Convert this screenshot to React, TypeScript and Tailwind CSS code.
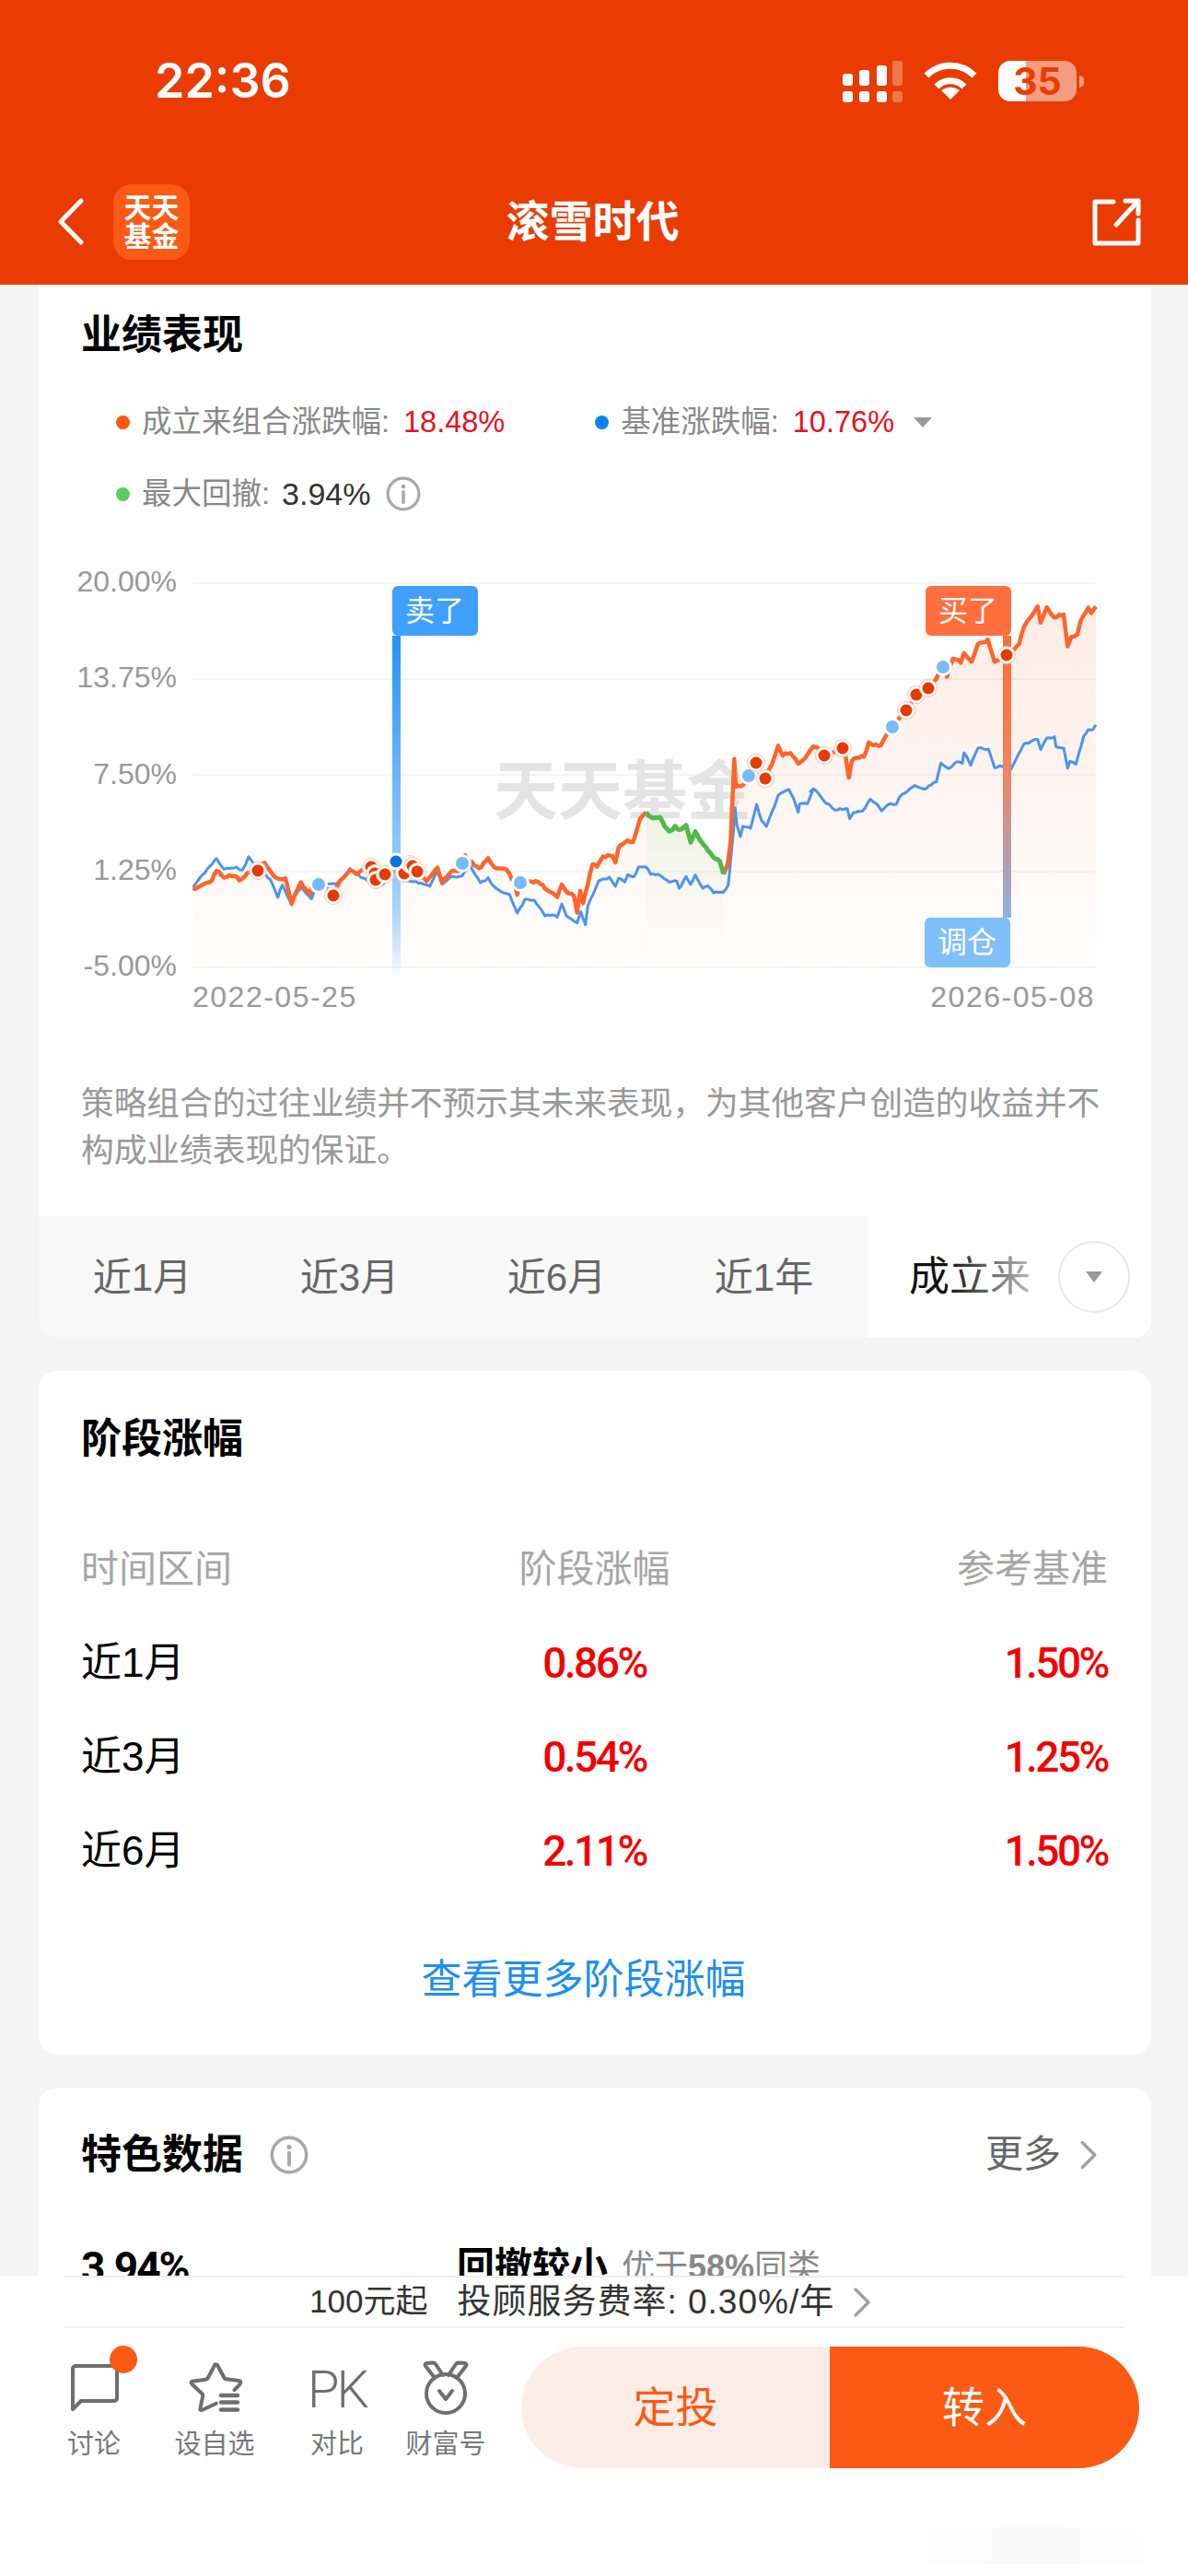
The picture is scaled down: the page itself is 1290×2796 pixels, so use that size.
import { ChevronRight } from 'lucide-react'

type Pt = number[]

// the traces below were read off 3x crops, hence the three offsets
const fromA = (p: Pt[]) => p.map(([x, y]) => [200 + x / 3, 880 + y / 3])
const fromB = (p: Pt[]) => p.map(([x, y]) => [600 + x / 3, 760 + y / 3])
const fromC = (p: Pt[]) => p.map(([x, y]) => [880 + x / 3, 630 + y / 3])

const ORANGE_1 = [
  ...fromA([[28, 255], [60, 240], [90, 228], [105, 195], [130, 215], [165, 210], [180, 225], [205, 205], [240, 190], [262, 168], [285, 205], [310, 225], [330, 220], [350, 300], [380, 235], [410, 270], [420, 225], [460, 250], [485, 275], [500, 240], [540, 190], [560, 205], [580, 195], [605, 185], [620, 225], [655, 210], [690, 190], [720, 205], [760, 195], [790, 230], [825, 185], [840, 230], [865, 200], [905, 195], [915, 148], [960, 190], [990, 155], [1010, 185], [1050, 190], [1075, 235], [1085, 270], [1095, 235], [1130, 230], [1160, 235], [1190, 265]]),
  ...fromB([[0, 630], [15, 640], [30, 600], [45, 625], [70, 635], [80, 695], [90, 620], [100, 660], [130, 535], [145, 540], [165, 510], [195, 505], [205, 530], [215, 480], [245, 460], [262, 465], [285, 390], [305, 365]]),
]
const GREEN = fromB([[305, 365], [320, 380], [350, 385], [380, 430], [400, 410], [415, 425], [435, 405], [450, 465], [465, 430], [500, 480], [530, 515], [545, 525], [557, 565]])
const ORANGE_2 = [
  ...fromB([[557, 565], [570, 535], [580, 460], [592, 190], [597, 280], [620, 275], [650, 240], [690, 250], [715, 205], [735, 148], [750, 180], [775, 170], [800, 205], [830, 180], [850, 150]]),
  ...fromC([[15, 540], [48, 570], [108, 545], [115, 575], [125, 645], [135, 585], [175, 570], [190, 530], [230, 540], [250, 500], [268, 476], [312, 424], [345, 372], [383, 350], [410, 320], [430, 280], [445, 310], [465, 255], [490, 265], [500, 240], [525, 265], [545, 210], [578, 195], [600, 265], [640, 243], [680, 210], [695, 150], [740, 85], [750, 135], [770, 90], [795, 120], [825, 110], [838, 215], [850, 185], [870, 175], [880, 130], [905, 90], [915, 110], [930, 85]]),
]
const BLUE = [
  ...fromA([[28, 248], [60, 210], [105, 155], [130, 190], [170, 185], [190, 195], [210, 152], [225, 170], [250, 190], [280, 225], [305, 280], [320, 240], [345, 295], [380, 250], [415, 285], [430, 245], [500, 235], [540, 190], [575, 215], [600, 230], [640, 245], [690, 195], [720, 225], [770, 235], [800, 245], [825, 195], [840, 240], [870, 215], [905, 215], [930, 175], [965, 235], [990, 220], [1010, 250], [1060, 275], [1085, 335], [1110, 290], [1140, 290], [1175, 340]]),
  ...fromB([[0, 700], [15, 705], [30, 665], [45, 700], [80, 725], [92, 690], [107, 730], [115, 670], [150, 590], [185, 578], [205, 605], [215, 580], [235, 590], [245, 570], [265, 575], [280, 545], [305, 545], [320, 565], [350, 570], [380, 590], [405, 590], [412, 615], [435, 575], [450, 598], [465, 570], [490, 612], [505, 605], [525, 625], [555, 628], [572, 605], [590, 420], [595, 350], [600, 405], [612, 445], [620, 410], [645, 415], [665, 340], [680, 390], [697, 410], [715, 365], [735, 310], [770, 292], [785, 320], [800, 365], [805, 335], [830, 335], [850, 290]]),
  ...fromC([[0, 685], [15, 680], [50, 725], [80, 745], [120, 745], [128, 775], [140, 755], [170, 752], [195, 715], [215, 725], [232, 750], [260, 725], [280, 730], [290, 705], [340, 670], [370, 680], [410, 655], [425, 595], [450, 615], [475, 590], [495, 595], [500, 560], [522, 600], [545, 545], [580, 550], [600, 610], [640, 600], [652, 615], [695, 535], [740, 515], [750, 550], [770, 515], [795, 510], [800, 540], [825, 545], [838, 610], [845, 590], [865, 598], [890, 510], [905, 485], [920, 488], [930, 470]]),
]

const RED_MARKS = [[280, 945], [362, 972], [403, 941], [407, 948], [408, 955], [418, 949], [439, 948], [445, 938], [448, 940], [453, 946], [821, 828], [831, 845], [895, 820], [915, 812], [984, 771], [995, 754], [1008, 747], [1093, 711]]
const BLUE_MARKS = [[346, 960], [502, 937], [565, 958], [813, 842], [969, 789], [1024, 724]]
const Y_LABELS = ['20.00%', '13.75%', '7.50%', '1.25%', '-5.00%']
const GRID_Y = [633, 737, 841, 946, 1050]

const TABS = ['近1月', '近3月', '近6月', '近1年']
const STAGES = [
  { label: '近1月', stage: '0.86%', base: '1.50%' },
  { label: '近3月', stage: '0.54%', base: '1.25%' },
  { label: '近6月', stage: '2.11%', base: '1.50%' },
]

// small fixed-seed wobble so the long lines look like daily data
function jag(points: Pt[], amp: number, seed: number) {
  let s = seed
  const out: string[] = []
  for (let i = 0; i < points.length - 1; i++) {
    const [x1, y1] = points[i]
    const [x2, y2] = points[i + 1]
    const n = Math.max(1, Math.floor((x2 - x1) / 2.5))
    for (let k = 0; k < n; k++) {
      const t = k / n
      s = (s * 9301 + 49297) % 233280
      const wobble = (s / 233280 - 0.5) * amp * 2
      out.push(`${(x1 + (x2 - x1) * t).toFixed(1)},${(y1 + (y2 - y1) * t + wobble).toFixed(1)}`)
    }
  }
  const last = points[points.length - 1]
  out.push(`${last[0]},${last[1]}`)
  return out.join(' ')
}

function InfoIcon({ size }: { size: number }) {
  return (
    <svg width={size} height={size} viewBox="0 0 36 36" fill="none">
      <circle cx="18" cy="18" r="16" stroke="#A8A8A8" strokeWidth="3" />
      <circle cx="18" cy="10.5" r="2.2" fill="#A8A8A8" />
      <path d="M18 16v11" stroke="#A8A8A8" strokeWidth="3.4" strokeLinecap="round" />
    </svg>
  )
}

function StatusBar() {
  return (
    <div className="flex h-[176px] items-center justify-between pl-[168px] pr-[113px]">
      <span className="font-['Inter',sans-serif] text-[52px] font-semibold text-white">22:36</span>
      <div className="flex items-center gap-[23px]">
        <svg width="65" height="45" viewBox="916 64 65 45" fill="#fff">
          <rect x="916" y="78" width="11" height="13" rx="3" />
          <rect x="934" y="74" width="11" height="17" rx="3" />
          <rect x="953" y="69" width="11" height="22" rx="3" />
          <rect x="970" y="64" width="11" height="27" rx="3" opacity="0.3" />
          <rect x="916" y="97" width="11" height="12" rx="3" />
          <rect x="934" y="97" width="11" height="12" rx="3" />
          <rect x="953" y="97" width="11" height="12" rx="3" />
          <rect x="970" y="97" width="11" height="12" rx="3" opacity="0.3" />
        </svg>
        <svg width="58" height="42" viewBox="1004 66 58 42" fill="none">
          <path d="M1007 81a37 37 0 0 1 52 0" stroke="#fff" strokeWidth="7" />
          <path d="M1018 93a21 21 0 0 1 30 0" stroke="#fff" strokeWidth="7" />
          <path d="M1033 107l-10-10q10-7 20 0z" fill="#fff" />
        </svg>
        <div className="flex items-center gap-[3px]">
          <div className="flex h-[44px] w-[85px] items-center justify-center rounded-[13px] bg-[linear-gradient(90deg,#ffffff_30px,#F59D80_30px)]">
            <span className="font-['Inter',sans-serif] text-[41px] font-bold leading-none text-[#EA3C02]">35</span>
          </div>
          <div className="h-[13px] w-[5px] rounded-r-full bg-white/50" />
        </div>
      </div>
    </div>
  )
}

function NavBar() {
  return (
    <div className="grid h-[130px] grid-cols-[1fr_auto_1fr] items-center px-[50px]">
      <div className="flex items-center gap-8 pl-[13px]">
        <svg width="28" height="52" viewBox="63 218 28 52" fill="none">
          <path d="M88 221L66 243.5L88 266" stroke="#fff" strokeWidth="5" strokeLinecap="round" strokeLinejoin="round" />
        </svg>
        <div className="flex h-[82px] w-[83px] flex-col items-center justify-center rounded-[20px] bg-[#FB5A14] text-[30px] font-bold leading-[31px] text-white">
          <span>天天</span>
          <span>基金</span>
        </div>
      </div>
      <span className="pr-[3px] text-[47px] font-bold text-white">滚雪时代</span>
      <div className="flex justify-end">
        <svg width="55" height="54" viewBox="1185 216 55 54" fill="none" stroke="#fff" strokeWidth="5" strokeLinecap="round" strokeLinejoin="round">
          <path d="M1209 221h-20v45h47v-25" />
          <path d="M1212 246l24-26" />
          <path d="M1222 220h14v14" />
        </svg>
      </div>
    </div>
  )
}

function TrendChart() {
  const orangeArea = `${jag(ORANGE_1, 0, 1)} ${jag(GREEN, 0, 1)} ${jag(ORANGE_2, 0, 1)} 1190,1050 209,1050`
  const greenArea = `${jag(GREEN, 0, 1)} 786,1050 702,1050`

  return (
    <div className="mt-[53px] flex h-[451px]">
      <div className="flex w-[150px] flex-col justify-between text-right text-[32px] leading-[34px] text-[#999999]">
        {Y_LABELS.map(label => (
          <span key={label}>{label}</span>
        ))}
      </div>
      <svg className="ml-[17px] mt-[6px]" width="985" height="445" viewBox="209 620 985 445" fill="none">
        <defs>
          <linearGradient id="orangeFill" gradientUnits="userSpaceOnUse" x1="0" y1="650" x2="0" y2="1050">
            <stop offset="0" stopColor="#FF5A1F" stopOpacity="0.12" />
            <stop offset="1" stopColor="#FF5A1F" stopOpacity="0.01" />
          </linearGradient>
          <linearGradient id="greenFill" gradientUnits="userSpaceOnUse" x1="0" y1="880" x2="0" y2="1040">
            <stop offset="0" stopColor="#5CCB5F" stopOpacity="0.1" />
            <stop offset="1" stopColor="#5CCB5F" stopOpacity="0" />
          </linearGradient>
          <linearGradient id="sellBar" x1="0" y1="0" x2="0" y2="1">
            <stop offset="0" stopColor="#2393F4" />
            <stop offset="0.6" stopColor="#8CC6FB" />
            <stop offset="1" stopColor="#2393F4" stopOpacity="0" />
          </linearGradient>
          <linearGradient id="buyBar" x1="0" y1="0" x2="0" y2="1">
            <stop offset="0" stopColor="#FF6A35" />
            <stop offset="0.45" stopColor="#F4825E" />
            <stop offset="1" stopColor="#8FB0E0" />
          </linearGradient>
        </defs>

        {GRID_Y.map(y => (
          <line key={y} x1="209" x2="1190" y1={y} y2={y} stroke="#F4F4F4" strokeWidth="2" />
        ))}
        <text x="536" y="884" fontSize="70" fontWeight="700" fill="#E4E4E4">天天基金</text>

        <polygon points={orangeArea} fill="url(#orangeFill)" />
        <polygon points={greenArea} fill="url(#greenFill)" />

        <polyline points={jag(BLUE, 0.9, 11)} stroke="#4A95EE" strokeWidth="3" strokeLinejoin="round" />
        <polyline points={jag(ORANGE_1, 1.3, 23)} stroke="#FF642B" strokeWidth="4.5" strokeLinejoin="round" />
        <polyline points={jag(ORANGE_2, 1.3, 37)} stroke="#FF642B" strokeWidth="4.5" strokeLinejoin="round" />
        <polyline points={jag(GREEN, 1.3, 5)} stroke="#52B84C" strokeWidth="5" strokeLinejoin="round" />

        <rect x="426" y="690" width="9" height="370" fill="url(#sellBar)" />
        <rect x="1089" y="690" width="9" height="306" fill="url(#buyBar)" />

        <rect x="426" y="636" width="93" height="54" rx="6" fill="#3EA0FB" />
        <text x="472" y="674" fontSize="32" textAnchor="middle" fill="#fff">卖了</text>
        <rect x="1005" y="636" width="93" height="54" rx="6" fill="#FF6F3D" />
        <text x="1051" y="674" fontSize="32" textAnchor="middle" fill="#fff">买了</text>
        <rect x="1004" y="996" width="93" height="54" rx="6" fill="#7FBFFB" />
        <text x="1050" y="1034" fontSize="32" textAnchor="middle" fill="#fff">调仓</text>

        {BLUE_MARKS.map(([x, y]) => (
          <g key={`${x}-${y}`}>
            <circle cx={x} cy={y} r="10" fill="#fff" />
            <circle cx={x} cy={y} r="7" fill="#75BBFD" />
          </g>
        ))}
        {RED_MARKS.map(([x, y]) => (
          <g key={`${x}-${y}`}>
            <circle cx={x} cy={y} r="9.5" fill="#fff" stroke="#F8C4B0" strokeWidth="1" />
            <circle cx={x} cy={y} r="6.5" fill="#E63B00" />
          </g>
        ))}
        <circle cx="430" cy="935" r="9.5" fill="#fff" />
        <circle cx="430" cy="935" r="6.5" fill="#0A72DE" />
      </svg>
    </div>
  )
}

function PerformanceCard() {
  return (
    <section className="overflow-hidden rounded-b-[20px] bg-white">
      <h2 className="pl-[46px] pt-[25px] text-[44px] font-bold leading-[60px] text-black">业绩表现</h2>

      <div className="mt-[39px] flex h-[50px] items-center pl-[84px] text-[32.5px] text-[#888888]">
        <i className="h-[15px] w-[15px] rounded-full bg-[#F9560F]" />
        <span className="ml-[13px]">成立来组合涨跌幅:</span>
        <span className="ml-[15px] text-[#E8121E]">18.48%</span>
        <i className="ml-[98px] h-[15px] w-[15px] rounded-full bg-[#0B84F3]" />
        <span className="ml-[13px]">基准涨跌幅:</span>
        <span className="ml-[15px] text-[#E8121E]">10.76%</span>
        <i className="ml-[21px] h-0 w-0 border-x-[10px] border-t-[11px] border-x-transparent border-t-[#999999]" />
      </div>
      <div className="mt-[28px] flex h-[50px] items-center pl-[84px] text-[32.5px] text-[#888888]">
        <i className="h-[15px] w-[15px] rounded-full bg-[#5CCB5F]" />
        <span className="ml-[13px]">最大回撤:</span>
        <span className="ml-[13px] text-[34px] text-[#333333]">3.94%</span>
        <span className="ml-[17px]"><InfoIcon size={38} /></span>
      </div>

      <TrendChart />

      <div className="flex h-[34px] items-center justify-between pl-[167px] pr-[61px] text-[32px] tracking-[1.5px] text-[#999999]">
        <span>2022-05-25</span>
        <span>2026-05-08</span>
      </div>

      <p className="mt-[74px] w-[1170px] pl-[46px] text-[35.7px] leading-[51px] text-[#999999]">
        策略组合的过往业绩并不预示其未来表现，为其他客户创造的收益并不构成业绩表现的保证。
      </p>

      <div className="mt-[45px] flex h-[132px] bg-[#F8F8F8]">
        {TABS.map(tab => (
          <div key={tab} className="flex w-[225px] items-center justify-center text-[42px] text-[#666666]">
            {tab}
          </div>
        ))}
        <div className="relative flex flex-1 items-center justify-between bg-white pl-[45px] pr-[23px]">
          <span className="text-[44px] text-[#111111]">成立来</span>
          <div className="absolute inset-y-0 left-[85px] w-[110px] bg-gradient-to-r from-white/0 to-white/85" />
          <div className="relative flex h-[78px] w-[78px] items-center justify-center rounded-full border-2 border-[#E8E8E8] bg-white">
            <i className="h-0 w-0 border-x-[9px] border-t-[12px] border-x-transparent border-t-[#999999]" />
          </div>
        </div>
      </div>
    </section>
  )
}

function StageCard() {
  return (
    <section className="mt-[36px] rounded-[20px] bg-white pb-[51px] pl-[46px] pr-[47px] pt-[44px]">
      <h2 className="text-[44px] font-bold leading-[60px] text-black">阶段涨幅</h2>
      <div className="mt-[81px] grid h-[60px] grid-cols-3 items-center text-[41px] text-[#A6A6A6]">
        <span>时间区间</span>
        <span className="text-center">阶段涨幅</span>
        <span className="text-right">参考基准</span>
      </div>
      <div className="mt-[21px]">
        {STAGES.map(row => (
          <div key={row.label} className="grid h-[102px] grid-cols-3 items-center">
            <span className="text-[44px] text-black">{row.label}</span>
            <span className="text-center font-['Roboto',sans-serif] text-[46px] font-medium tracking-[-2.5px] text-[#F40000]">{row.stage}</span>
            <span className="text-right font-['Roboto',sans-serif] text-[46px] font-medium tracking-[-2.5px] text-[#F40000]">{row.base}</span>
          </div>
        ))}
      </div>
      <div className="mt-[59px] pr-[24px] text-center text-[44px] leading-[60px] text-[#1E8FEE]">查看更多阶段涨幅</div>
    </section>
  )
}

function FeatureCard() {
  return (
    <section className="mt-[36px] rounded-t-[20px] bg-white pl-[46px] pr-[41px] pt-[43px]">
      <div className="flex h-[60px] items-center">
        <h2 className="text-[44px] font-bold text-black">特色数据</h2>
        <span className="ml-[29px]"><InfoIcon size={42} /></span>
        <span className="ml-auto text-[41px] text-[#666666]">更多</span>
        <ChevronRight className="ml-[3px] h-[54px] w-[54px] text-[#A0A0A0]" strokeWidth={1.5} />
      </div>
      <div className="mt-[62px] flex h-[60px] items-center">
        <span className="w-[408px] font-['Roboto',sans-serif] text-[46px] font-bold tracking-[-2px] text-black">3.94%</span>
        <span className="text-[41px] font-bold text-black">回撤较小</span>
        <span className="ml-[15px] text-[36px] text-[#888888]">优于<b className="font-semibold">58%</b>同类</span>
      </div>
    </section>
  )
}

function BottomBar() {
  return (
    <footer className="h-[326px] bg-white">
      <div className="mx-[70px] flex h-[57px] items-center border-y-2 border-[#EEEEEE] pl-[266px] text-[#333333]">
        <span className="text-[35px]">100元起</span>
        <span className="ml-[32px] text-[37px] tracking-[1px]">投顾服务费率: 0.30%/年</span>
        <ChevronRight className="ml-[2px] h-[56px] w-[56px] text-[#A0A0A0]" strokeWidth={1.5} />
      </div>
      <div className="flex items-start pl-[40px]">
        <div className="flex w-[124px] flex-col items-center pt-[19px]">
          <svg width="96" height="78" viewBox="54 2546 96 78" fill="none">
            <path d="M79 2615v-44a3 3 0 0 1 3-3h42a3 3 0 0 1 3 3v32a3 3 0 0 1-3 3H88z" stroke="#6E6E6E" strokeWidth="4" strokeLinejoin="round" />
            <circle cx="134" cy="2561" r="15" fill="#FB5A14" />
          </svg>
          <span className="mt-[9px] text-[29px] leading-[40px] text-[#777777]">讨论</span>
        </div>
        <div className="flex w-[138px] flex-col items-center pt-[19px]">
          <svg width="80" height="78" viewBox="193 2546 80 78" fill="none" stroke="#6E6E6E" strokeWidth="4" strokeLinecap="round" strokeLinejoin="round">
            <path d="M233 2567q1.500-1 3 0l7.500 14q.7 1 2 1.200l15 2q2 1-1 5l-5 5" />
            <path d="M233.500 2566.500l-8 15q-.7 1-2 1.200l-15 2q-2 1 0 3l11 10.500q1 1 .8 2.500l-3 14q0 2 2.500 1l15-7" />
            <path d="M240 2600h18M240 2607.500h18M240 2615.500h18" strokeWidth="4.500" />
          </svg>
          <span className="mt-[9px] text-[29px] leading-[40px] text-[#777777]">设自选</span>
        </div>
        <div className="flex w-[128px] flex-col items-center pt-[19px]">
          <span className="flex h-[78px] items-center pt-[18px] font-['Roboto',sans-serif] text-[56px] font-light tracking-[-3px] text-[#6E6E6E]">PK</span>
          <span className="mt-[9px] text-[29px] leading-[40px] text-[#777777]">对比</span>
        </div>
        <div className="flex w-[108px] flex-col items-center pt-[19px]">
          <svg width="80" height="78" viewBox="444 2546 80 78" fill="none" stroke="#6E6E6E" strokeWidth="4" strokeLinecap="round" strokeLinejoin="round">
            <circle cx="484" cy="2598" r="21" />
            <path d="M472 2581l-10-13q-1-2 1-3l7-.5q2 0 3 1.500l8 12" />
            <path d="M496 2581l10-13q1-2-1-3l-7-.5q-2 0-3 1.500l-8 12" />
            <path d="M477 2595l7 9 7-9" />
          </svg>
          <span className="mt-[9px] text-[29px] leading-[40px] text-[#777777]">财富号</span>
        </div>
        <div className="ml-[28px] mt-[20px] flex h-[132px] w-[671px] overflow-hidden rounded-full text-[46px]">
          <div className="flex w-[335px] items-center justify-center bg-[#FEEDE7] text-[#FB5A14]">定投</div>
          <div className="flex flex-1 items-center justify-center bg-[#FB5A14] text-white">转入</div>
        </div>
      </div>
      <div className="ml-[970px] mt-[64px] h-[40px] w-[305px] bg-gradient-to-r from-white via-[#F8F8F8] to-white" />
    </footer>
  )
}

export default function App() {
  return (
    <div className="flex h-[2796px] w-[1290px] flex-col overflow-hidden bg-[#F5F5F5] font-['Liberation_Sans','Noto_Sans_CJK_SC',sans-serif]">
      <header className="h-[309px] shrink-0 bg-[#EA3C02]">
        <StatusBar />
        <NavBar />
      </header>
      <main className="min-h-0 flex-1 overflow-hidden pl-[42px] pr-[40px]">
        <PerformanceCard />
        <StageCard />
        <FeatureCard />
      </main>
      <BottomBar />
    </div>
  )
}
